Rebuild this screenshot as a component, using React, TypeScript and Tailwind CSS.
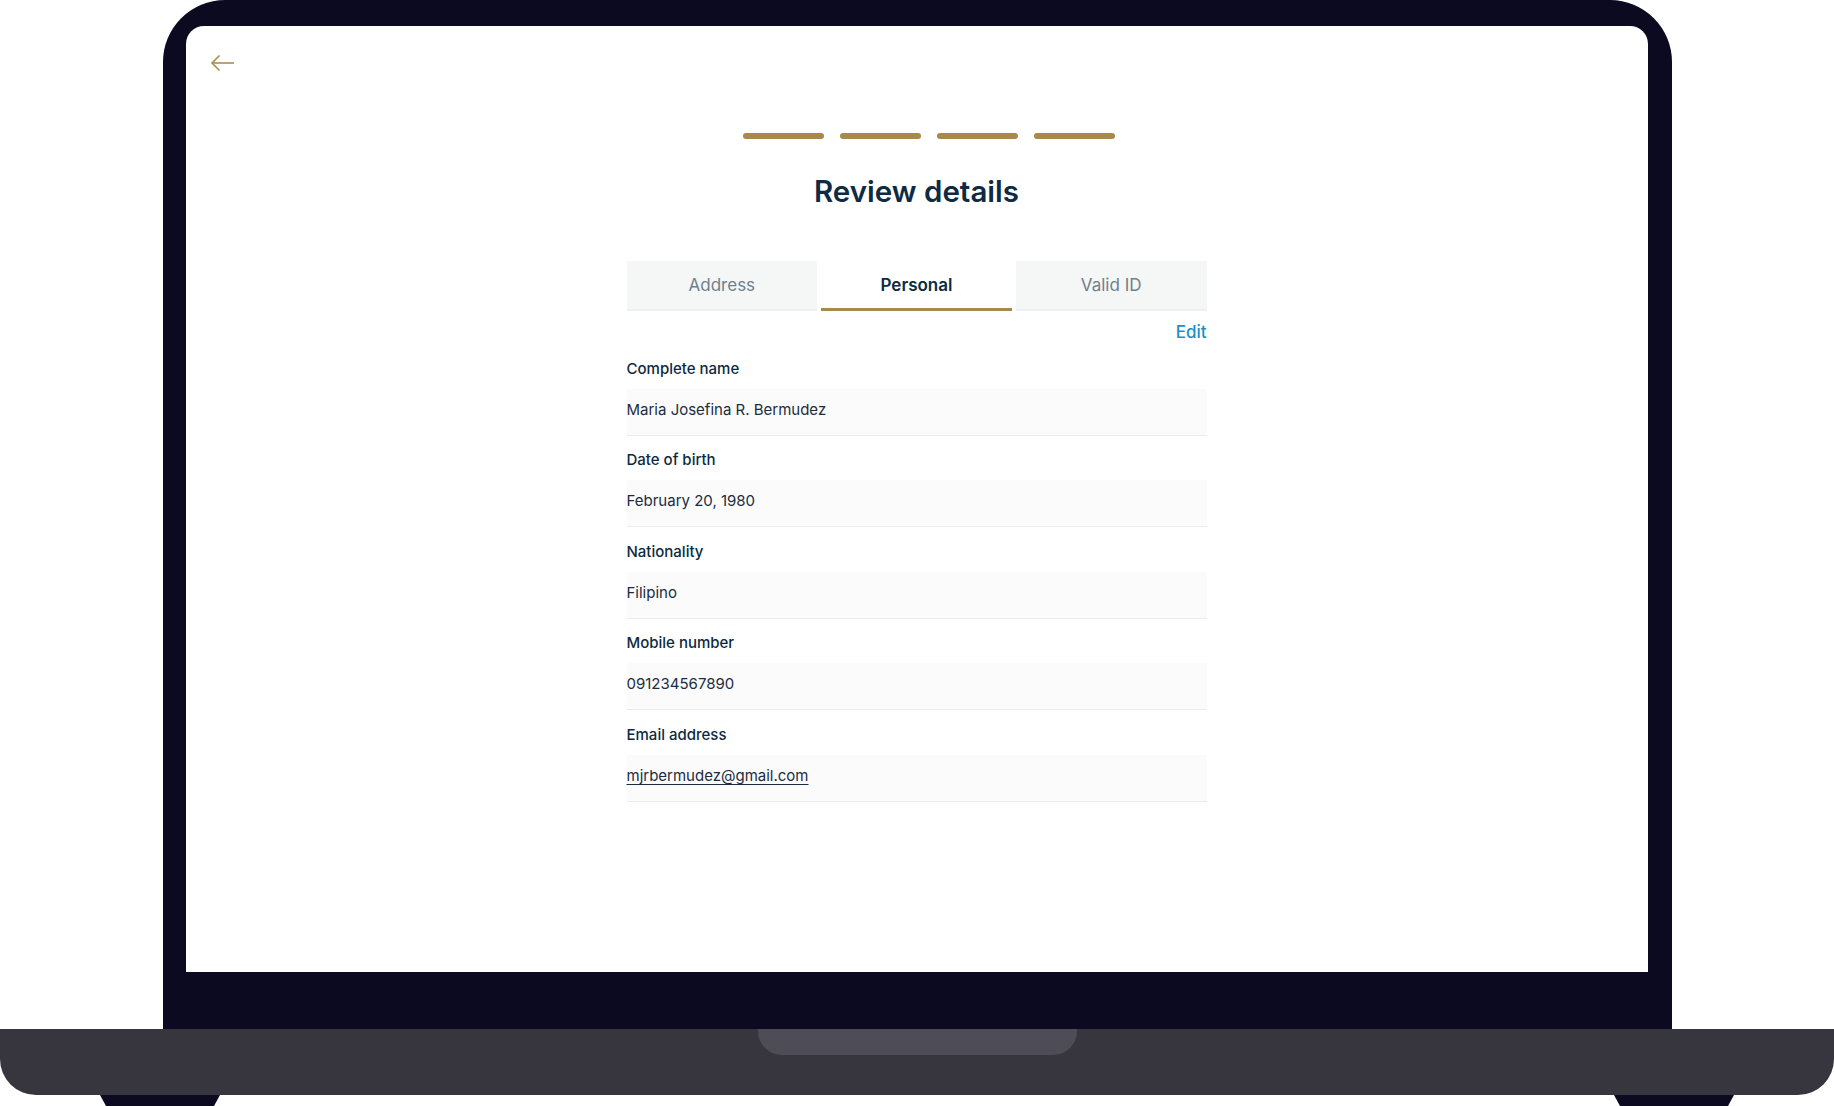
import { useState } from "react";

type TField = {
  label: string;
  value: string;
  link?: boolean;
};

const fields: TField[] = [
  { label: "Complete name", value: "Maria Josefina R. Bermudez" },
  { label: "Date of birth", value: "February 20, 1980" },
  { label: "Nationality", value: "Filipino" },
  { label: "Mobile number", value: "091234567890" },
  { label: "Email address", value: "mjrbermudez@gmail.com", link: true },
];

const tabs = ["Address", "Personal", "Valid ID"];

const App = () => {
  const [active, setActive] = useState("Personal");

  return (
    <div className="w-[1834px] h-[1106px] bg-white flex flex-col items-center overflow-hidden font-['Inter','Open_Sans',sans-serif]">
      {/* lid */}
      <div className="w-[1509px] h-[1029px] shrink-0 bg-[#0b0a20] rounded-t-[62px] pt-[26px] pl-[23px] pr-[24px] pb-[57px] flex">
        <div className="flex-1 bg-white rounded-t-[18px] flex flex-col items-center">
          {/* back */}
          <div className="w-full px-[24px] pt-[27px]">
            <button className="block text-[#ad8c4f]">
              <svg width="25" height="20" viewBox="0 0 25 20" fill="none" stroke="currentColor" strokeWidth="1.6">
                <path d="M2 10H24" />
                <path d="M9.5 2.5L2 10L9.5 17.5" />
              </svg>
            </button>
          </div>

          {/* steps */}
          <div className="mt-[60px] ml-[24px] flex gap-[16px]">
            {[0, 1, 2, 3].map((i) => (
              <div key={i} className="w-[81px] h-[6px] rounded-full bg-[#a8894b]" />
            ))}
          </div>

          <h1 className="mt-[34px] h-[36px] leading-[36px] text-[29.5px] font-semibold text-[#0e2b44]">
            Review details
          </h1>

          <div className="w-[580px] mt-[52px]">
            {/* tabs */}
            <div className="flex gap-[4px] h-[50px]">
              {tabs.map((t) => (
                <button
                  key={t}
                  onClick={() => setActive(t)}
                  className={
                    t === active
                      ? "flex-1 bg-white text-[17px] font-semibold text-[#0d2a40] border-b-[3px] border-[#a8894b] pt-[3px]"
                      : "flex-1 bg-[#f5f6f6] text-[17px] text-[#6e808e] border-b-[2px] border-[#eeefef] pt-[2px]"
                  }
                >
                  {t}
                </button>
              ))}
            </div>

            <div className="mt-[9px] flex justify-end h-[24px] leading-[24px]">
              <a className="text-[17px] font-medium text-[#1b8fc9] cursor-pointer">Edit</a>
            </div>

            {/* fields */}
            <div className="flex flex-col">
              {fields.map((f) => (
                <div key={f.label} className="mt-[14.5px]">
                  <div className="h-[20px] leading-[20px] text-[15px] font-medium text-[#0d2a40]">
                    {f.label}
                  </div>
                  <div className="mt-[10px] h-[47px] pb-[3px] bg-[#fbfbfb] border-b border-[#ececec] flex items-center">
                    <span
                      className={
                        f.link
                          ? "text-[15px] text-[#1a2d40] underline underline-offset-[3px] decoration-[#1a2d40]"
                          : "text-[15px] text-[#1a2d40]"
                      }
                    >
                      {f.value}
                    </span>
                  </div>
                </div>
              ))}
            </div>
          </div>
        </div>
      </div>

      {/* base */}
      <div className="w-full h-[66px] shrink-0 bg-[#37363f] rounded-b-[36px] flex justify-center">
        <div className="w-[319px] h-[26px] bg-[#4e4d57] rounded-b-[24px]" />
      </div>

      {/* feet */}
      <div className="w-full h-[11px] shrink-0 flex justify-between px-[100px]">
        <div className="w-[120px] h-full bg-[#0b0a20] [clip-path:polygon(0_0,100%_0,95%_100%,5%_100%)]" />
        <div className="w-[120px] h-full bg-[#0b0a20] [clip-path:polygon(0_0,100%_0,95%_100%,5%_100%)]" />
      </div>
    </div>
  );
};

export default App;
